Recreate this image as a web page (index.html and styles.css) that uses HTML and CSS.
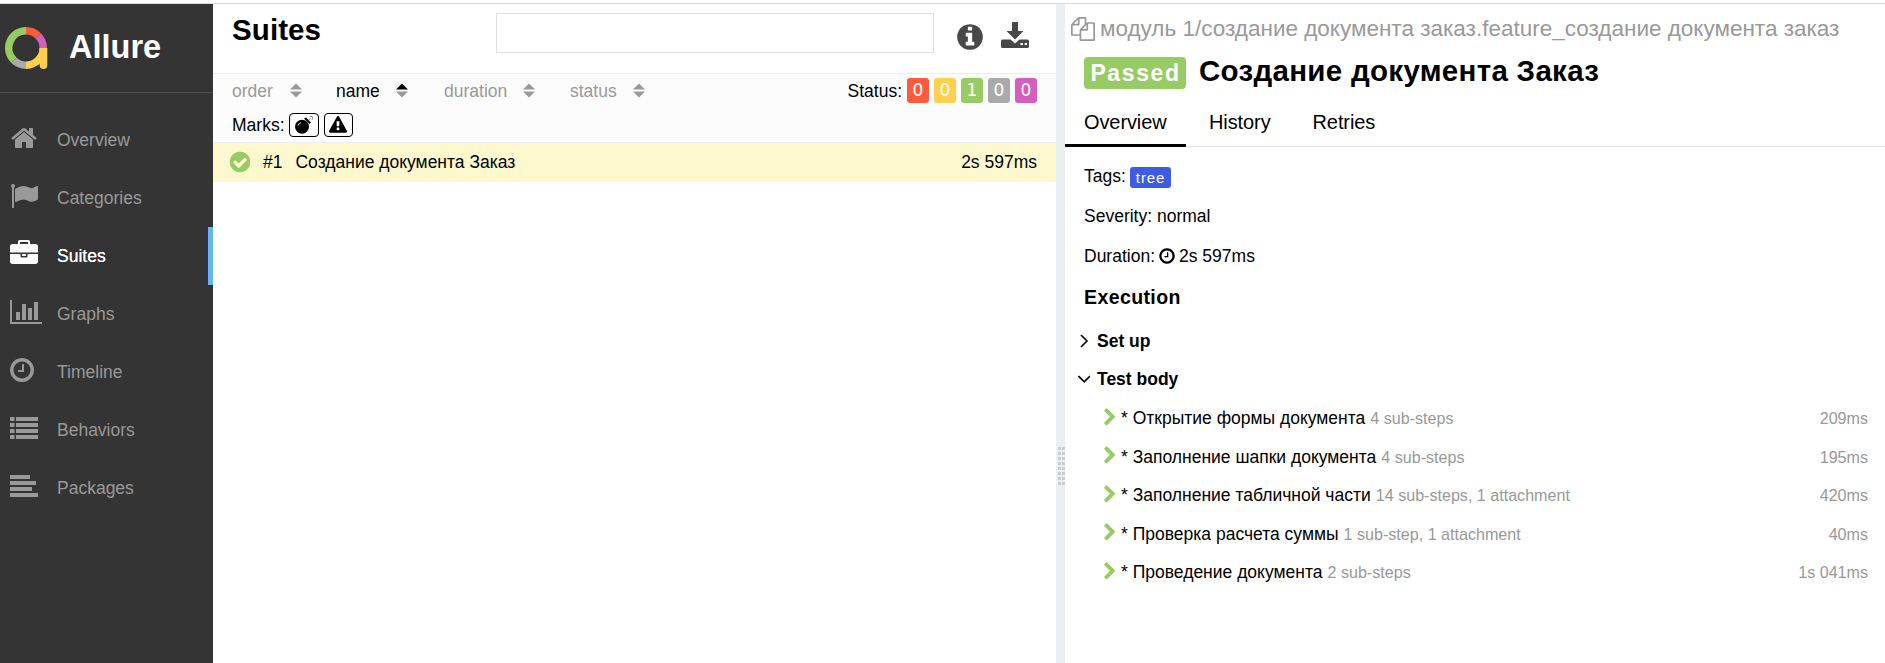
FILE: index.html
```html
<!DOCTYPE html>
<html lang="en">
<head>
<meta charset="utf-8">
<title>Allure Report</title>
<link rel="stylesheet" href="styles.css">
</head>
<body>
<svg class="sprite" aria-hidden="true">
  <symbol id="home" viewBox="0 0 1792 1792"><path d="M1472 992v480q0 26-19 45t-45 19h-384v-384h-256v384h-384q-26 0-45-19t-19-45v-480q0-1 .5-3t.5-3l575-474 575 474q1 2 1 6zm223-69l-62 74q-8 9-21 11h-3q-13 0-21-7l-692-577-692 577q-12 8-24 7-13-2-21-11l-62-74q-8-10-7-23.5t11-21.5l719-599q32-26 76-26t76 26l244 204v-195q0-14 9-23t23-9h192q14 0 23 9t9 23v408l219 182q10 8 11 21.5t-7 23.5z"/></symbol>
  <symbol id="flag" viewBox="0 0 1792 1792"><path d="M320 256q0 72-64 110v1266q0 13-9.5 22.5t-22.5 9.5h-64q-13 0-22.5-9.5t-9.5-22.5v-1266q-64-38-64-110 0-53 37.5-90.5t90.5-37.5 90.5 37.5 37.5 90.5zm1472 64v763q0 25-12.5 38.5t-39.5 27.5q-215 116-369 116-61 0-123.5-22t-108.5-48-115.5-48-142.5-22q-192 0-464 146-17 9-33 9-26 0-45-19t-19-45v-742q0-32 31-55 21-14 79-43 236-120 421-120 107 0 200 29t219 88q38 19 88 19 54 0 117.5-21t110-47 88-47 54.5-21q26 0 45 19t19 45z"/></symbol>
  <symbol id="briefcase" viewBox="0 0 1792 1792"><path d="M640 256h512v-128h-512v128zm1152 640v480q0 66-47 113t-113 47h-1472q-66 0-113-47t-47-113v-480h672v160q0 26 19 45t45 19h320q26 0 45-19t19-45v-160h672zm-768 0v128h-256v-128h256zm768-480v384h-1792v-384q0-66 47-113t113-47h352v-160q0-40 28-68t68-28h576q40 0 68 28t28 68v160h352q66 0 113 47t47 113z"/></symbol>
  <symbol id="chart" viewBox="0 0 2048 1792"><path d="M640 896v512h-256v-512h256zm384-512v1024h-256v-1024h256zm1024 1152v128h-2048v-1536h128v1408h1920zm-640-896v768h-256v-768h256zm384-384v1152h-256v-1152h256z"/></symbol>
  <symbol id="clock" viewBox="0 0 1792 1792"><path d="M1024 544v448q0 14-9 23t-23 9h-320q-14 0-23-9t-9-23v-64q0-14 9-23t23-9h224v-352q0-14 9-23t23-9h64q14 0 23 9t9 23zm416 352q0-148-73-273t-198-198-273-73-273 73-198 198-73 273 73 273 198 198 273 73 273-73 198-198 73-273zm224 0q0 209-103 385.5t-279.5 279.5-385.5 103-385.5-103-279.5-279.5-103-385.5 103-385.5 279.5-279.5 385.5-103 385.5 103 279.5 279.5 103 385.5z"/></symbol>
  <symbol id="list" viewBox="0 0 28 28"><path d="M0 4h4.500v4H0zM6 4h22v4H6zM0 10h4.500v4H0zM6 10h22v4H6zM0 16h4.500v4H0zM6 16h22v4H6zM0 22h4.500v4H0zM6 22h22v4H6z"/></symbol>
  <symbol id="lines" viewBox="0 0 28 28"><path d="M0 4h20v4H0zM0 10h26v4H0zM0 16h22v4H0zM0 22h28v4H0z"/></symbol>
  <symbol id="check" viewBox="0 0 1792 1792"><path d="M1412 734q0-28-18-46l-91-90q-19-19-45-19t-45 19l-408 407-226-226q-19-19-45-19t-45 19l-91 90q-18 18-18 46 0 27 18 45l362 362q19 19 45 19 27 0 46-19l543-543q18-18 18-45zm252 162q0 209-103 385.5t-279.5 279.5-385.5 103-385.5-103-279.5-279.5-103-385.5 103-385.5 279.5-279.5 385.5-103 385.5 103 279.5 279.5 103 385.5z"/></symbol>
  <symbol id="info" viewBox="0 0 1792 1792"><path d="M1152 1376v-160q0-14-9-23t-23-9h-96v-512q0-14-9-23t-23-9h-320q-14 0-23 9t-9 23v160q0 14 9 23t23 9h96v320h-96q-14 0-23 9t-9 23v160q0 14 9 23t23 9h448q14 0 23-9t9-23zm-128-896v-160q0-14-9-23t-23-9h-192q-14 0-23 9t-9 23v160q0 14 9 23t23 9h192q14 0 23-9t9-23zm640 416q0 209-103 385.5t-279.5 279.5-385.5 103-385.5-103-279.5-279.5-103-385.5 103-385.5 279.5-279.5 385.5-103 385.5 103 279.5 279.5 103 385.5z"/></symbol>
  <symbol id="download" viewBox="0 0 28 26"><path fill-rule="evenodd" d="M11 0h6v9h5.500L14 17.500 5.500 9H11zM1.500 17.500H9.500L14 21.500l4.500-4H26.500Q28 17.500 28 19v5.500Q28 26 26.500 26h-25Q0 26 0 24.500V19q0-1.500 1.500-1.500zM19.500 21v2H22v-2zM23.700 21v2h2.300v-2z"/></symbol>
  <symbol id="warning" viewBox="0 0 1792 1792"><path d="M1024 1375v-190q0-14-9.500-23.500t-22.500-9.500h-192q-13 0-22.500 9.500t-9.500 23.500v190q0 14 9.500 23.500t22.500 9.500h192q13 0 22.500-9.500t9.500-23.500zm-2-374l18-459q0-12-10-19-13-11-24-11h-220q-11 0-24 11-10 7-10 21l17 457q0 10 10 16.500t24 6.500h185q14 0 23.500-6.500t10.500-16.500zm-14-934l768 1408q35 63-2 126-17 29-46.500 46t-63.500 17h-1536q-34 0-63.500-17t-46.500-46q-37-63-2-126l768-1408q17-31 47-49t65-18 65 18 47 49z"/></symbol>
  <symbol id="files" viewBox="0 0 1792 1792"><path d="M1696 384q40 0 68 28t28 68v1216q0 40-28 68t-68 28h-960q-40 0-68-28t-28-68v-288h-544q-40 0-68-28t-28-68v-672q0-40 20-88t48-76l408-408q28-28 76-48t88-20h416q40 0 68 28t28 68v328q68-40 128-40h416zm-544 213l-299 299h299v-299zm-640-384l-299 299h299v-299zm196 647l316-316v-416h-384v416q0 40-28 68t-68 28h-416v640h512v-256q0-40 20-88t48-76zm956 804v-1152h-384v416q0 40-28 68t-68 28h-416v640h896z"/></symbol>
  <symbol id="chevron" viewBox="0 0 1792 1792"><path d="M1363 877l-742 742q-19 19-45 19t-45-19l-166-166q-19-19-19-45t19-45l531-531-531-531q-19-19-19-45t19-45l166-166q19-19 45-19t45 19l742 742q19 19 19 45t-19 45z"/></symbol>
</svg>

<div class="app">
  <nav class="side">
    <div class="brand">
      <svg class="brand-logo" viewBox="0 0 42 42">
        <path stroke="#97cc64" d="M21 3.750A17.250 17.250 0 0 0 8.800 33.200"/>
        <path stroke="#aaa" d="M8.800 33.200A17.250 17.250 0 0 0 21 38.250"/>
        <path stroke="#fd5a3e" d="M21 3.750A17.250 17.250 0 0 1 33.200 8.800"/>
        <path stroke="#d35ebe" d="M33.200 8.800A17.250 17.250 0 0 1 38.250 21"/>
        <path stroke="#ffd050" d="M38.250 21A17.250 17.250 0 0 1 21 38.250"/>
        <path class="brand-tail" d="M34.500 21H42.300V38.200a3.800 3.800 0 0 1-7.600 0z"/>
      </svg>
      <span class="brand-name">Allure</span>
    </div>
    <div class="menu">
      <a class="item"><svg class="item-icon"><use href="#home"/></svg>Overview</a>
      <a class="item"><svg class="item-icon"><use href="#flag"/></svg>Categories</a>
      <a class="item item-active"><svg class="item-icon"><use href="#briefcase"/></svg>Suites</a>
      <a class="item"><svg class="item-icon item-icon-wide"><use href="#chart"/></svg>Graphs</a>
      <a class="item"><svg class="item-icon item-icon-clock"><use href="#clock"/></svg>Timeline</a>
      <a class="item"><svg class="item-icon item-icon-list"><use href="#list"/></svg>Behaviors</a>
      <a class="item"><svg class="item-icon item-icon-list"><use href="#lines"/></svg>Packages</a>
    </div>
  </nav>

  <main class="suites">
    <header class="suites-head">
      <h1 class="suites-title">Suites</h1>
      <input class="search" type="text" aria-label="Search">
      <svg class="head-info"><use href="#info"/></svg>
      <svg class="head-download"><use href="#download"/></svg>
    </header>
    <div class="filters">
      <div class="sorters">
        <span class="sorter sorter-order">order<svg class="sort" viewBox="0 0 12 15"><path d="M0 6.500L6 .5l6 6zM0 8.500h12l-6 6z"/></svg></span>
        <span class="sorter sorter-name">name<svg class="sort" viewBox="0 0 12 15"><path class="sort-on" d="M0 6.500L6 .5l6 6z"/><path d="M0 8.500h12l-6 6z"/></svg></span>
        <span class="sorter sorter-duration">duration<svg class="sort" viewBox="0 0 12 15"><path d="M0 6.500L6 .5l6 6zM0 8.500h12l-6 6z"/></svg></span>
        <span class="sorter sorter-status">status<svg class="sort" viewBox="0 0 12 15"><path d="M0 6.500L6 .5l6 6zM0 8.500h12l-6 6z"/></svg></span>
        <div class="statuses">
          <span>Status:</span>
          <span class="count failed">0</span><span class="count broken">0</span><span class="count passed">1</span><span class="count skipped">0</span><span class="count unknown">0</span>
        </div>
      </div>
      <div class="marks">
        <span>Marks:</span>
        <span class="mark mark-bomb"><svg viewBox="0 0 18 18"><circle cx="7" cy="10.700" r="7"/><path d="M9 2.500l5.500 5.500 1.500-1.500-5-5z"/><path class="shine" d="M3 9.500Q3.500 7 6 6.600"/><path class="fuse" d="M13.500 4l2-1.500M14.500 .5h2.500M17.500 .5v3"/></svg></span>
        <span class="mark mark-warn"><svg><use href="#warning"/></svg></span>
      </div>
    </div>
    <div class="case">
      <svg class="case-icon"><use href="#check"/></svg>
      <span class="case-num">#1</span>
      <span>Создание документа Заказ</span>
      <span class="case-time">2s 597ms</span>
    </div>
  </main>

  <div class="split"><div class="grip"></div></div>

  <section class="detail">
    <div class="path"><svg class="path-icon"><use href="#files"/></svg><span>модуль 1/создание документа заказ.feature_создание документа заказ</span></div>
    <div class="heading"><span class="verdict">Passed</span><h2 class="title">Создание документа Заказ</h2></div>
    <div class="tabs"><a class="tab tab-active">Overview</a><a class="tab">History</a><a class="tab">Retries</a></div>
    <div class="info">Tags: <span class="tag">tree</span></div>
    <div class="info">Severity: normal</div>
    <div class="info">Duration: <svg class="info-clock"><use href="#clock"/></svg> 2s 597ms</div>
    <h3 class="execution">Execution</h3>
    <div class="stage"><svg class="angle" viewBox="0 0 12 14"><path d="M3 1L9 7l-6 6"/></svg>Set up</div>
    <div class="stage"><svg class="angle" viewBox="0 0 12 14"><path d="M.5 4L6.300 9.800 12 4"/></svg>Test body</div>
    <div class="steps">
      <div class="step"><svg class="step-icon"><use href="#chevron"/></svg><span>* Открытие формы документа</span><span class="sub">4 sub-steps</span><span class="time">209ms</span></div>
      <div class="step"><svg class="step-icon"><use href="#chevron"/></svg><span>* Заполнение шапки документа</span><span class="sub">4 sub-steps</span><span class="time">195ms</span></div>
      <div class="step"><svg class="step-icon"><use href="#chevron"/></svg><span>* Заполнение табличной части</span><span class="sub">14 sub-steps, 1 attachment</span><span class="time">420ms</span></div>
      <div class="step"><svg class="step-icon"><use href="#chevron"/></svg><span>* Проверка расчета суммы</span><span class="sub">1 sub-step, 1 attachment</span><span class="time">40ms</span></div>
      <div class="step"><svg class="step-icon"><use href="#chevron"/></svg><span>* Проведение документа</span><span class="sub">2 sub-steps</span><span class="time">1s 041ms</span></div>
    </div>
  </section>
</div>
</body>
</html>
```
FILE: styles.css
```css
* { box-sizing: border-box; }
body {
  margin: 0;
  padding-top: 3px;
  height: 663px;
  overflow: hidden;
  background: #fff;
  color: #000;
  font: 17.5px/26px "Liberation Sans", Arial, sans-serif;
}
h1, h2, h3 { margin: 0; }
svg { flex: none; display: block; fill: currentColor; }
.sprite { position: absolute; width: 0; height: 0; }

.app { display: flex; height: 660px; border-top: 1px solid #d9dbdf; }

/* Sidebar */
.side { flex: none; width: 213px; background: #343434; color: #999; }
.brand { display: flex; align-items: center; height: 89px; padding-left: 5px; border-bottom: 1px solid #4f4f4f; }
.brand-logo { width: 42px; height: 42px; margin-right: 22px; overflow: visible; fill: none; stroke-width: 7.5px; }
.brand-tail { fill: #ffd050; }
.brand-name { margin-top: -2px; color: #fff; font-size: 32.5px; font-weight: bold; }
.menu { padding-top: 18px; }
.item { display: flex; align-items: center; height: 58px; padding: 0 0 0 10px; }
.item-icon { width: 28px; height: 28px; margin: -4px 19px 0 0; }
.item-icon-wide { width: 32px; margin-right: 15px; }
.item-icon-clock { margin-left: -2px; margin-right: 21px; }
.item-icon-list { margin-top: -6px; }
.item-active { color: #fff; text-shadow: 0 0 .6px #fff; border-right: 5px solid #64b5f6; }

/* Suites */
.suites { flex: none; width: 843px; }
.suites-head { display: flex; height: 69px; padding: 9px 27px 0 19px; color: #484848; }
.suites-title { width: 264px; font-size: 29.5px; line-height: 34px; color: #000; letter-spacing: .1px; }
.search { width: 438px; height: 40px; border: 1px solid #e0e0e0; background: #fff; padding: 0 8px; }
.head-info { width: 30px; height: 30px; margin: 9px 0 0 21px; }
.head-download { width: 28px; height: 26px; margin: 9px 0 0 16px; }
.filters { height: 70px; padding: 4px 19px 0 19px; background: #fcfcfc; border: solid #eceff1; border-width: 1px 0; }
.sorters { display: flex; align-items: center; height: 25px; color: #999; }
.sorter { display: flex; align-items: center; justify-content: space-between; }
.sort { width: 12px; height: 15px; }
.sort-on { fill: #000; }
.sorter-order { width: 70px; }
.sorter-name { width: 72px; margin-left: 34px; color: #000; }
.sorter-name .sort { color: #999; }
.sorter-duration { width: 91px; margin-left: 36px; }
.sorter-status { width: 75px; margin-left: 35px; }
.statuses { display: flex; align-items: center; gap: 5px; margin-left: auto; color: #000; }
.count { width: 22px; height: 25px; border-radius: 3px; color: #fff; font: 17px/25px "DejaVu Sans", sans-serif; text-align: center; }
.failed { background: #fd5a3e; }
.broken { background: #ffd050; }
.passed { background: #97cc64; }
.skipped { background: #aaa; }
.unknown { background: #d35ebe; }
.marks { display: flex; align-items: center; gap: 5px; height: 35px; margin-top: 6px; padding-bottom: 3px; }
.mark { display: flex; align-items: center; justify-content: center; width: 29px; height: 24px; border: 1px solid #000; border-radius: 4px; background: #fff; }
.mark-bomb { width: 30px; margin-left: -1px; }
.mark svg { width: 18px; height: 18px; }
.mark .shine { fill: none; stroke: #fff; stroke-width: .8px; }
.mark .fuse { fill: none; stroke: #777; stroke-width: .8px; }
.case { display: flex; align-items: center; height: 39px; padding: 0 19px 1px 15px; background: #fef8cf; }
.case-icon { width: 24px; height: 24px; color: #97cc64; }
.case-num { margin: 0 13px 0 11px; }
.case-time { margin-left: auto; }

/* Splitter */
.split { flex: none; display: flex; justify-content: center; width: 9px; background: #eceff1; }
.grip {
  width: 7px;
  height: 39px;
  margin: 443px 0 0 1px;
  background: repeating-linear-gradient(90deg, #ccc 0 3px, transparent 3px 4px);
  mask: repeating-linear-gradient(#000 0 3px, transparent 3px 5px);
}

/* Test case */
.detail { flex: 1; min-width: 0; padding-top: 9px; }
.path { display: flex; align-items: center; height: 32px; padding-left: 6px; color: #999; font-size: 22.5px; white-space: nowrap; }
.path-icon { width: 24px; height: 24px; margin-right: 5px; }
.heading { display: flex; align-items: center; height: 52px; padding-left: 19px; }
.verdict { width: 102px; height: 32px; margin: 3px 13px 0 0; border-radius: 4px; background: #97cc64; color: #fff; font-weight: bold; font-size: 23px; line-height: 33px; text-align: center; letter-spacing: 1.6px; padding-left: 1px; }
.title { font-size: 29.5px; letter-spacing: .3px; }
.tabs { display: flex; height: 50px; border-bottom: 1px solid #e5e5e5; font-size: 20px; }
.tab { height: 50px; padding: 12px 19px 0 23px; letter-spacing: -.1px; }
.tab-active { width: 121px; padding-left: 19px; border-bottom: 3px solid #000; }
.info { display: flex; align-items: center; gap: 5px; height: 40px; padding-left: 19px; }
.tabs + .info { margin-top: 9px; }
.tag { height: 21px; margin: 2px 0 0 -1px; padding: 0 6px; border-radius: 3px; background: #3e5be6; color: #fff; font-size: 15px; line-height: 21px; letter-spacing: .9px; }
.info-clock { width: 18px; height: 18px; margin: 0 -2px; }
.execution { height: 44px; padding-left: 19px; font-size: 19.5px; line-height: 43px; letter-spacing: .4px; }
.stage { display: flex; align-items: center; height: 38px; padding-left: 13px; font-weight: bold; }
.execution + .stage { margin-top: 2px; }
.angle { width: 12px; height: 14px; margin-right: 7px; fill: none; stroke: #000; stroke-width: 1.6px; }
.steps { padding: 1px 17px 0 35px; }
.step { display: flex; align-items: center; height: 38.5px; }
.step-icon { width: 20px; height: 19px; margin: -2px 1px 0 0; color: #97cc64; }
.sub { margin-left: 5px; color: #999; font-size: 16.1px; }
.time { margin-left: auto; color: #999; font-size: 16.1px; }
```
